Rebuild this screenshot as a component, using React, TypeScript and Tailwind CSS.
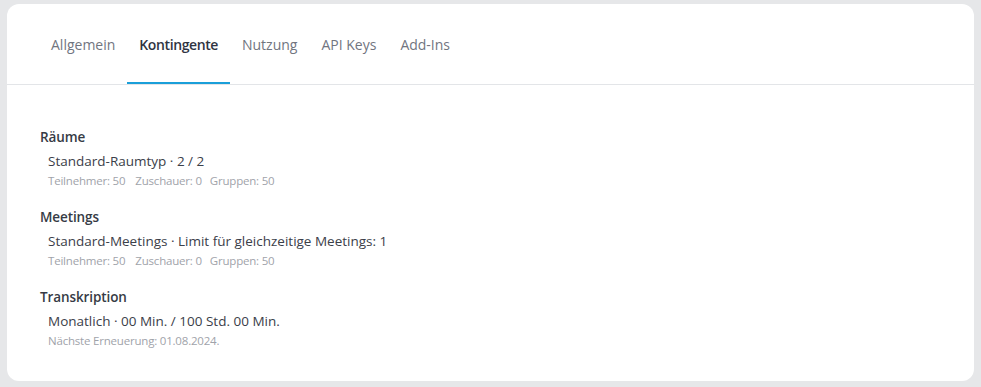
import React from "react";

const tabs = ["Allgemein", "Kontingente", "Nutzung", "API Keys", "Add-Ins"];

type Section = { title: string; line: string; sub: React.ReactNode };

const sections: Section[] = [
  {
    title: "Räume",
    line: "Standard-Raumtyp · 2 / 2",
    sub: (
      <>
        <span>Teilnehmer: 50</span>
        <span className="ml-[10px]">Zuschauer: 0</span>
        <span className="ml-[8px]">Gruppen: 50</span>
      </>
    ),
  },
  {
    title: "Meetings",
    line: "Standard-Meetings · Limit für gleichzeitige Meetings: 1",
    sub: (
      <>
        <span>Teilnehmer: 50</span>
        <span className="ml-[10px]">Zuschauer: 0</span>
        <span className="ml-[8px]">Gruppen: 50</span>
      </>
    ),
  },
  {
    title: "Transkription",
    line: "Monatlich · 00 Min. / 100 Std. 00 Min.",
    sub: <span>Nächste Erneuerung: 01.08.2024.</span>,
  },
];

export default function App() {
  return (
    <div
      className="w-[981px] h-[387px] bg-[#e6e7e9] pt-[4px] px-[7px] overflow-hidden"
      style={{ fontFamily: '"Open Sans", "Noto Sans", sans-serif' }}
    >
      <div className="bg-white rounded-[12px] h-[377px]">
        <div className="h-[81px] border-b border-[#e3e5e8] flex items-stretch px-[32px]">
          {tabs.map((t) => {
            const active = t === "Kontingente";
            return (
              <div
                key={t}
                className={
                  active
                    ? "px-[12px] flex items-center border-b-2 border-[#1a9fd9] pt-[2px] text-[14px] font-semibold text-[#2f3442] tracking-[-0.4px]"
                    : "px-[12px] flex items-center border-b-2 border-transparent pt-[2px] text-[14px] text-[#71757f]"
                }
              >
                {t}
              </div>
            );
          })}
        </div>
        <div className="pl-[33px] pt-[42px] flex flex-col gap-[18px]">
          {sections.map((s) => (
            <div key={s.title} className="flex flex-col">
              <div className="text-[13.5px] leading-[20px] font-semibold text-[#363b45] tracking-[-0.1px]">
                {s.title}
              </div>
              <div className="mt-[4px] pl-[8px] text-[13.5px] leading-[20px] text-[#3b4049]">
                {s.line}
              </div>
              <div className="mt-[2px] pl-[8px] text-[11.5px] leading-[16px] text-[#9fa3aa] tracking-[-0.2px]">
                {s.sub}
              </div>
            </div>
          ))}
        </div>
      </div>
    </div>
  );
}
